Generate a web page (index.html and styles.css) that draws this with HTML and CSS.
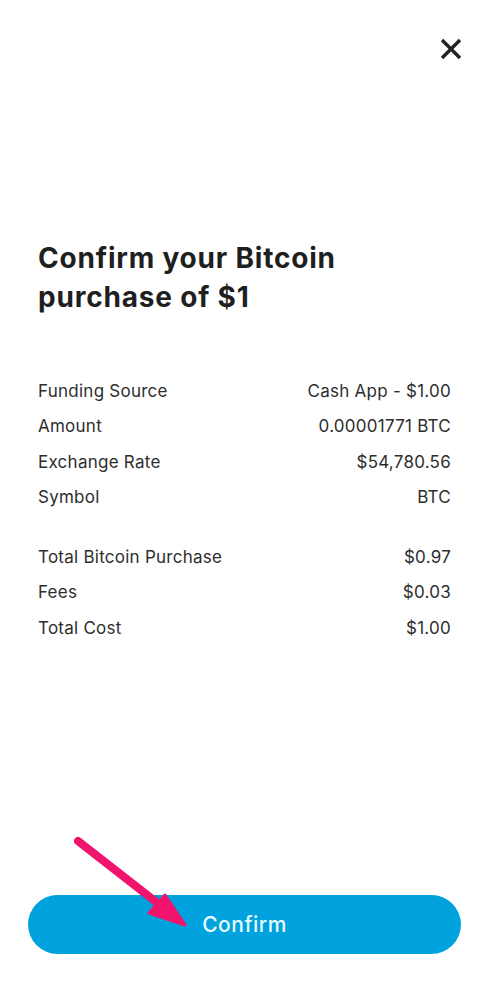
FILE: index.html
```html
<!DOCTYPE html>
<html lang="en">
<head>
  <meta charset="UTF-8">
  <title>Confirm Bitcoin Purchase</title>
  <link rel="stylesheet" href="styles.css">
</head>
<body>
<div id="page">
  <div class="top">
    <span class="close">
      <svg width="22" height="22" viewBox="0 0 22 22">
        <path d="M2 2 L20 20 M20 2 L2 20" stroke="#222" stroke-width="3.4" stroke-linecap="butt" fill="none"/>
      </svg>
    </span>
  </div>

  <h1 class="title">Confirm your Bitcoin purchase of $1</h1>

  <ul class="details">
    <li><span>Funding Source</span><span>Cash App - $1.00</span></li>
    <li><span>Amount</span><span>0.00001771 BTC</span></li>
    <li><span>Exchange Rate</span><span>$54,780.56</span></li>
    <li><span>Symbol</span><span>BTC</span></li>
  </ul>

  <ul class="details totals">
    <li><span>Total Bitcoin Purchase</span><span>$0.97</span></li>
    <li><span>Fees</span><span>$0.03</span></li>
    <li><span>Total Cost</span><span>$1.00</span></li>
  </ul>

  <div class="bottom">
    <button class="confirm">Confirm</button>
    <svg class="pointer" width="130" height="110" viewBox="0 0 130 110">
      <line x1="8" y1="8" x2="90" y2="72" stroke="#f0146e" stroke-width="8" stroke-linecap="round"/>
      <polygon points="115,92 79,80 95,62" fill="#f0146e" stroke="#f0146e" stroke-width="3" stroke-linejoin="round"/>
    </svg>
  </div>
</div>
</body>
</html>
```

FILE: styles.css
```css
* {
  padding: 0;
  margin: 0;
  list-style: none;
  box-sizing: border-box;
}

body {
  background-color: #fff;
  font-family: Inter, "Liberation Sans", sans-serif;
  color: #2e2e2e;
}

#page {
  width: 489px;
  height: 986px;
  display: flex;
  flex-direction: column;
}

.top {
  display: flex;
  justify-content: flex-end;
  padding: 38px 27px 0 0;
}

.close {
  display: block;
  width: 22px;
  height: 22px;
}

.title {
  margin: 179px 38px 0;
  font-size: 28px;
  line-height: 39px;
  font-weight: 700;
  letter-spacing: 0.8px;
  color: #1f1f1f;
  width: 320px;
}

.details {
  margin: 57px 38px 0;
}

.details li {
  display: flex;
  justify-content: space-between;
  font-size: 17px;
  line-height: 35.3px;
  letter-spacing: 0.25px;
}

.totals {
  margin-top: 25px;
}

.bottom {
  margin-top: auto;
  padding: 0 28px 32px;
  position: relative;
}

.confirm {
  display: block;
  width: 100%;
  height: 59px;
  border: none;
  border-radius: 30px;
  background-color: #00a2de;
  color: #e8fbff;
  font-family: Inter, "Liberation Sans", sans-serif;
  font-size: 21px;
  font-weight: 500;
  letter-spacing: 0.5px;
}

.pointer {
  position: absolute;
  left: 70px;
  top: -62px;
}
```
